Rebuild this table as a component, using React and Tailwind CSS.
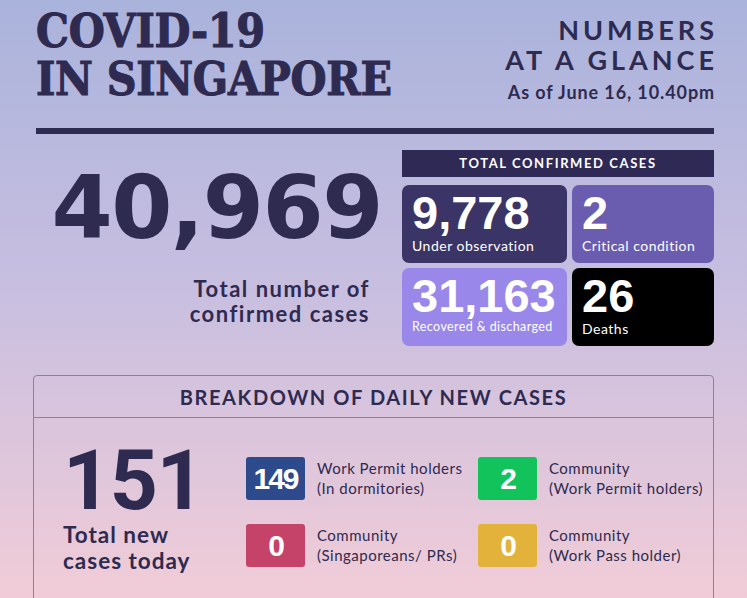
export default function App() {
  const tiles = [
    { n: "9,778", label: "Under observation", bg: "bg-[#3b3466]", lbl: "text-[14px] tracking-[0.5px]" },
    { n: "2", label: "Critical condition", bg: "bg-[#6a5caf]", lbl: "text-[14px] tracking-[0.5px]" },
    { n: "31,163", label: "Recovered & discharged", bg: "bg-[#9988ea]", lbl: "text-[12.5px] tracking-[0.4px]" },
    { n: "26", label: "Deaths", bg: "bg-black", lbl: "text-[14px] tracking-[0.5px]" },
  ];
  const daily = [
    { n: "149", a: "Work Permit holders", b: "(In dormitories)", bg: "bg-[#2c4a8c]" },
    { n: "2", a: "Community", b: "(Work Permit holders)", bg: "bg-[#12c25b]" },
    { n: "0", a: "Community", b: "(Singaporeans/ PRs)", bg: "bg-[#c54268]" },
    { n: "0", a: "Community", b: "(Work Pass holder)", bg: "bg-[#e3b23b]" },
  ];

  return (
    <div className="w-[747px] h-[598px] overflow-hidden bg-gradient-to-b from-[#aab3dc] via-[#c9bfe0] to-[#f1ccd7] text-[#2e2a50] font-['Lato',sans-serif]">
      <div className="pl-[36px] pr-[33px] pt-[7px] flex justify-between">
        <h1 className="font-['DejaVu_Serif',serif] font-bold text-[46px] leading-[48px] tracking-[-0.3px] [font-stretch:condensed] [-webkit-text-stroke:1px_#2e2a50]">
          COVID-19
          <br />
          IN SINGAPORE
        </h1>
        <div className="text-right pt-[8px]">
          <div className="font-bold text-[27px] leading-[30px] tracking-[4px] mr-[-4px]">
            NUMBERS
            <br />
            AT A GLANCE
          </div>
          <div className="font-bold text-[18px] tracking-[0.9px] mt-[4px] mr-[-1px]">As of June 16, 10.40pm</div>
        </div>
      </div>

      <div className="ml-[36px] mr-[33px] mt-[22px] h-[6px] bg-[#2e2a50]" />

      <div className="flex mt-[16px] pl-[46px] pr-[33px]">
        <div className="flex flex-col items-end w-[336px] shrink-0">
          <div className="font-['DejaVu_Sans',sans-serif] font-bold text-[88px] leading-[88px] tracking-[-1.5px] mt-[14px]">40,969</div>
          <div className="font-bold text-[22px] leading-[25px] tracking-[1.5px] text-right mt-[24px] mr-[12px]">
            Total number of
            <br />
            confirmed cases
          </div>
        </div>
        <div className="ml-auto w-[312px]">
          <div className="h-[27px] bg-[#2f2a55] text-white text-[13px] font-bold tracking-[1.6px] flex items-center justify-center">
            TOTAL CONFIRMED CASES
          </div>
          <div className="grid grid-cols-[165px_142px] gap-[5px] mt-[8px]">
            {tiles.map((t) => (
              <div key={t.n} className={`${t.bg} h-[78px] rounded-[7px] px-[10px] pt-[6px] text-white`}>
                <div className="font-['Liberation_Sans',sans-serif] font-bold text-[47px] leading-[44px]">{t.n}</div>
                <div className={`${t.lbl}`}>{t.label}</div>
              </div>
            ))}
          </div>
        </div>
      </div>

      <div className="mx-[33px] mt-[29px] border border-[#8d7f9f] rounded-[4px] h-[260px]">
        <div className="h-[42px] border-b border-[#8d7f9f] flex items-center justify-center font-bold text-[20px] tracking-[1.6px]">
          BREAKDOWN OF DAILY NEW CASES
        </div>
        <div className="flex items-start pl-[29px] pt-[21px]">
          <div className="w-[183px] shrink-0">
            <div className="font-['Roboto',sans-serif] font-bold text-[84px] leading-[84px] tracking-[-1.5px]">151</div>
            <div className="font-bold text-[22.5px] leading-[26px] tracking-[1px] mt-[-1px]">
              Total new
              <br />
              cases today
            </div>
          </div>
          <div className="grid grid-cols-[232px_225px] gap-y-[24px] mt-[18px]">
            {daily.map((d, i) => (
              <div key={i} className="flex items-start">
                <div className={`${d.bg} w-[59px] h-[43px] shrink-0 rounded-[3px] flex items-center justify-center text-white font-['Liberation_Sans',sans-serif] font-bold text-[30px] tracking-[-2px]`}>
                  {d.n}
                </div>
                <div className="ml-[12px] text-[15px] leading-[20px] tracking-[0.5px] mt-[1px] whitespace-nowrap">
                  {d.a}
                  <br />
                  {d.b}
                </div>
              </div>
            ))}
          </div>
        </div>
      </div>
    </div>
  );
}
